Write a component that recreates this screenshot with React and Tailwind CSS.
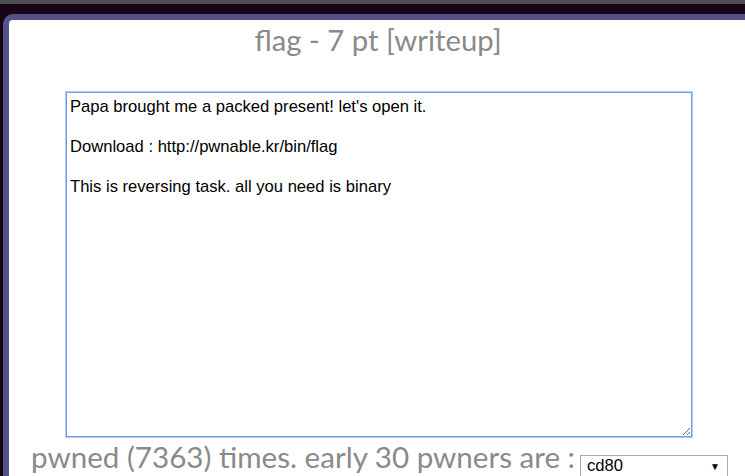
import React from 'react';

const lato = { fontFamily: 'Lato, "Open Sans", sans-serif' };
const arial = { fontFamily: '"Liberation Sans", Arial, sans-serif' };

const body = `Papa brought me a packed present! let's open it.

Download : http://pwnable.kr/bin/flag

This is reversing task. all you need is binary`;

export default function App() {
  return (
    <div className="w-[745px] h-[476px] overflow-hidden bg-[#170417] border-t-4 border-[#4d4d4d]">
      {/* Challenge panel */}
      <div className="ml-[3px] mt-[10px] w-[760px] h-[480px] rounded-tl-[10px] border-[6px] border-r-0 border-[#545287] bg-white">
        <h1 className="text-center text-[29.3px] leading-[36px] text-[#8a8a8a] pl-[2px] pt-[2px] w-[736px]" style={lato}>
          flag - 7 pt [writeup]
        </h1>

        <div className="ml-[57px] mt-[34px]">
          <textarea
            readOnly
            defaultValue={body}
            className="block w-[626px] h-[345px] px-[3px] py-[4px] text-[16.6px] leading-[20px] text-black bg-white border border-[#6d9ce8] ring-1 ring-[#b3cbf3] outline-none resize"
            style={arial}
          />
        </div>

        <div className="flex items-start mt-[2px] ml-[22px]">
          <span className="text-[29.6px] leading-[36px] text-[#8a8a8a]" style={lato}>
            pwned (7363) times. early 30 pwners are :
          </span>
          <div
            className="ml-[5px] mt-[16px] w-[148px] h-[22px] border border-[#a9a9a9] flex items-center justify-between pl-[6px] pr-[7px] text-[16.6px] text-black"
            style={arial}
          >
            <span>cd80</span>
            <span className="text-[10px]">▼</span>
          </div>
        </div>
      </div>
    </div>
  );
}
